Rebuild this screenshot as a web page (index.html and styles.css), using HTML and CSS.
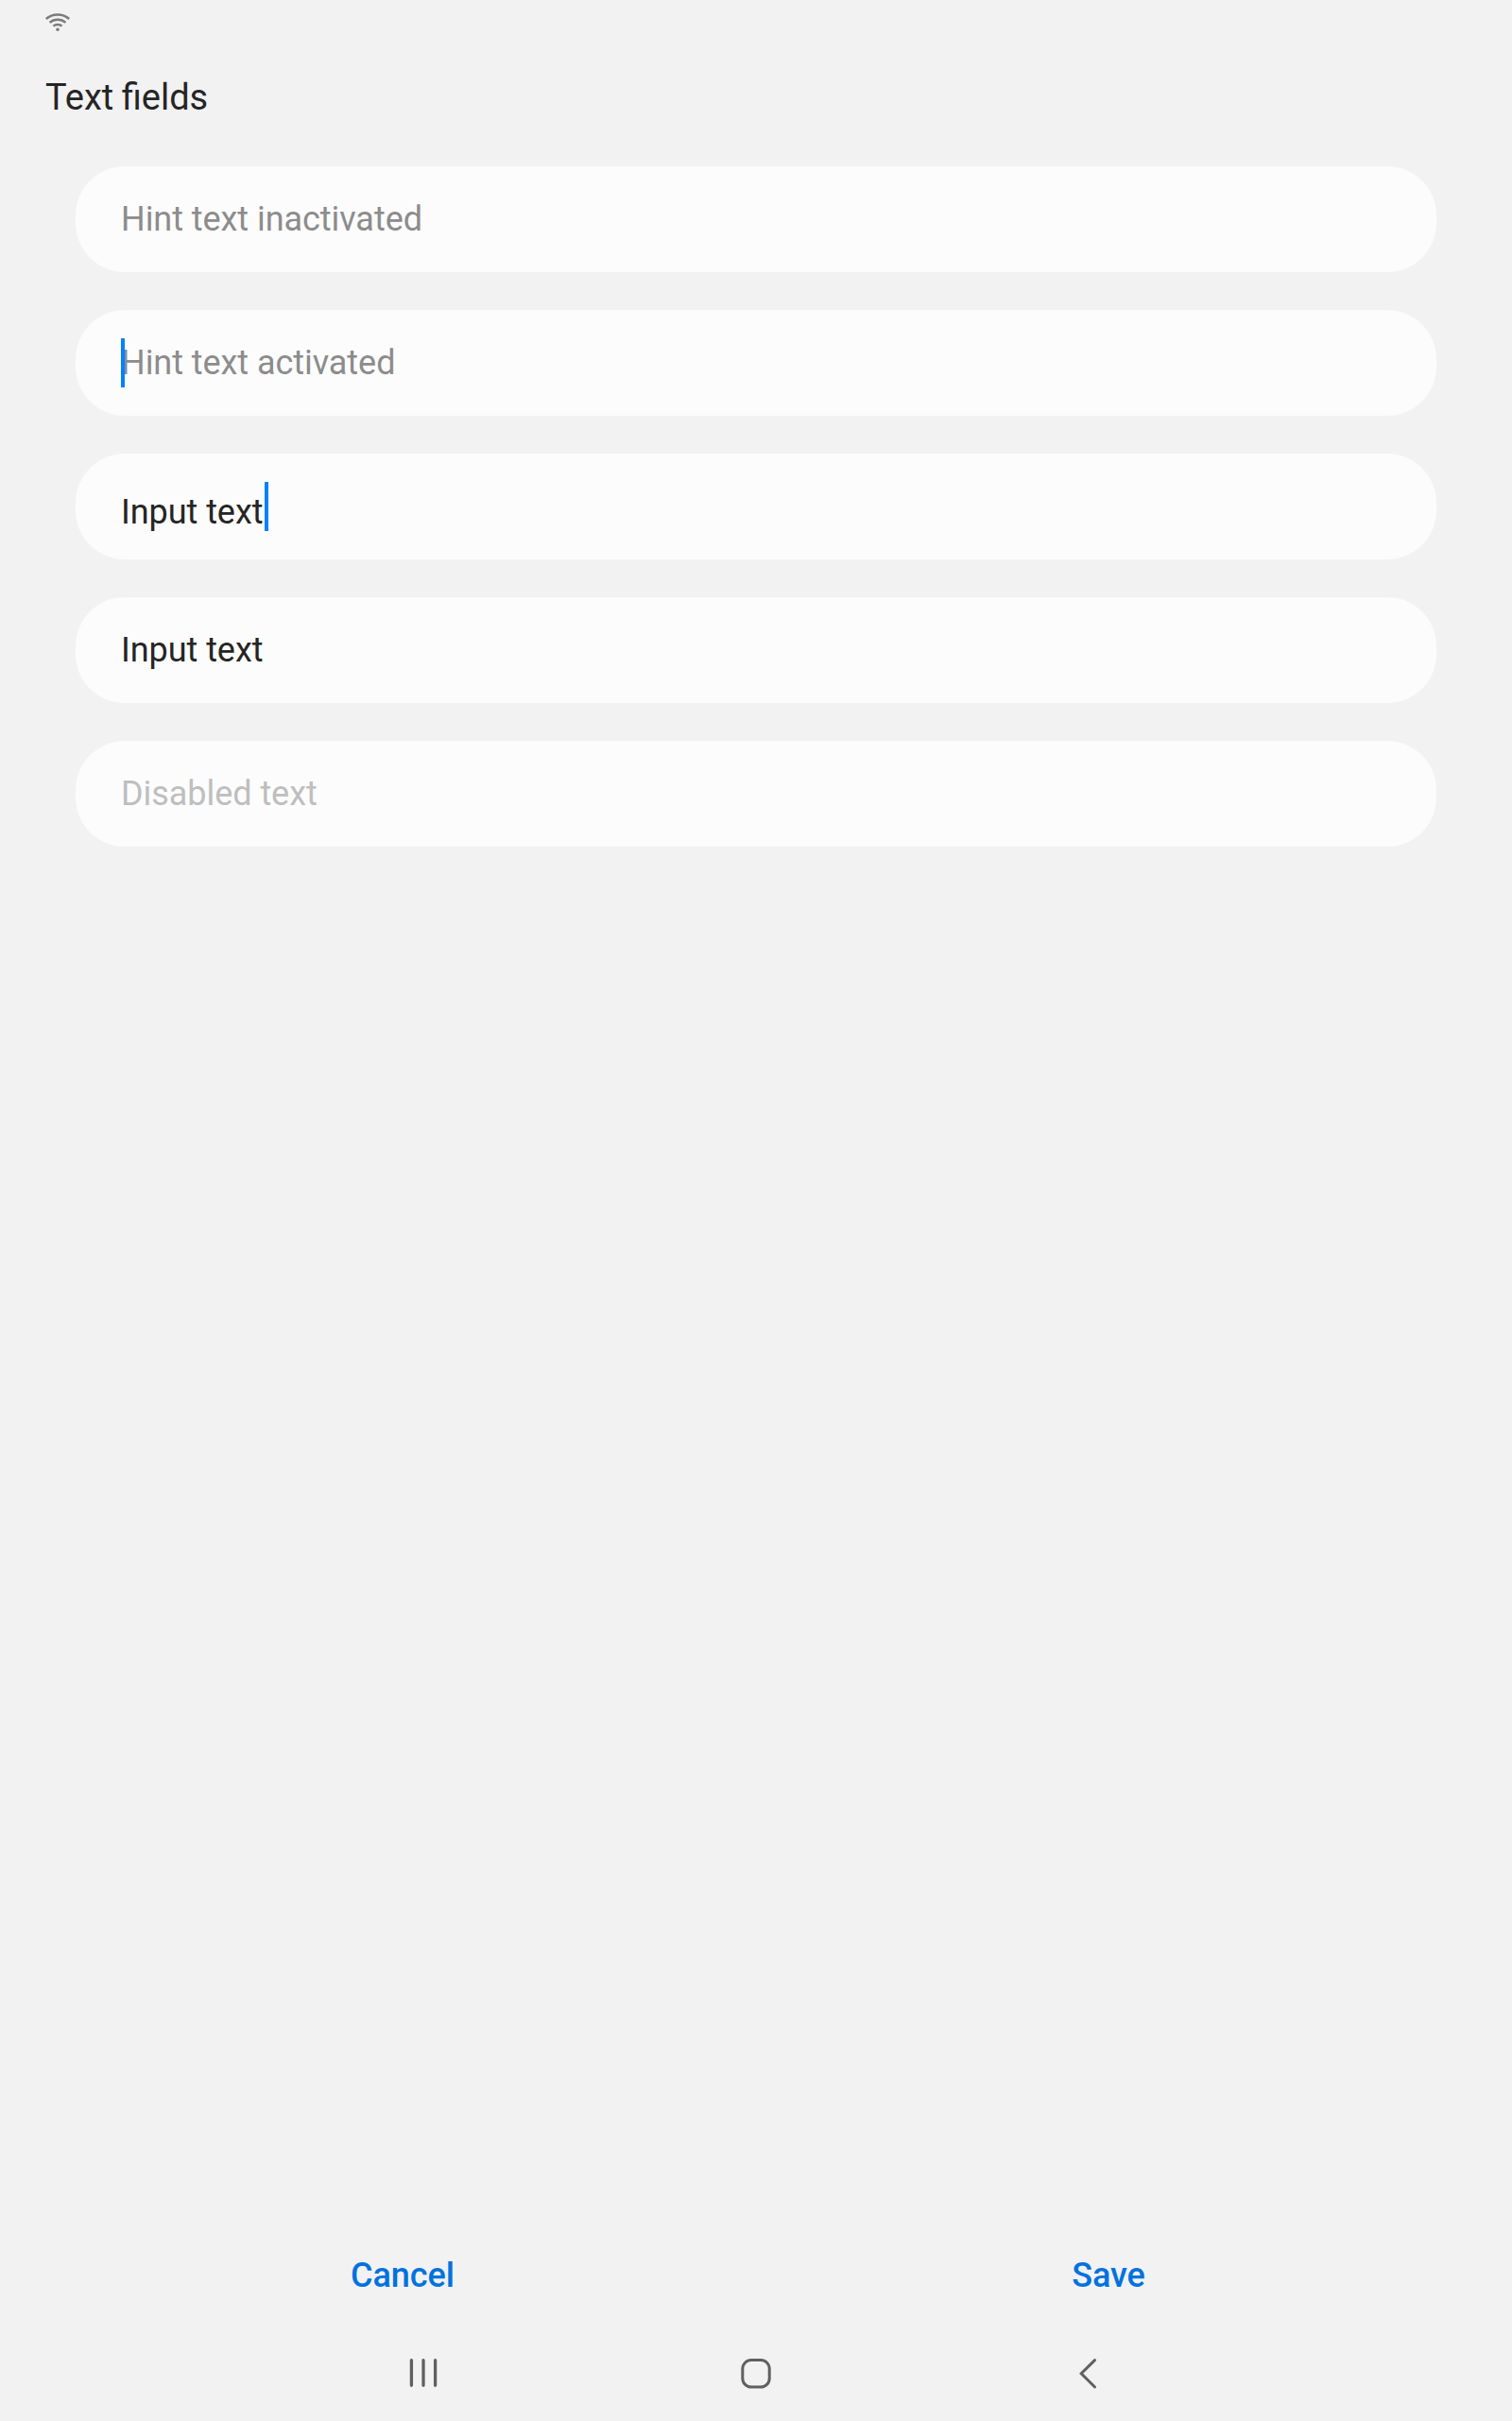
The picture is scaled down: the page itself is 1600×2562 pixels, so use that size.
FILE: index.html
```html
<!DOCTYPE html>
<html lang="en">
<head>
<meta charset="utf-8">
<title>Text fields</title>
<link rel="stylesheet" href="styles.css">
</head>
<body>
<div class="screen">
  <header class="status-bar">
    <svg class="wifi" width="28" height="22" viewBox="0 0 28 22" fill="none" stroke="#7b7b7b" stroke-width="2.5">
      <path d="M1.8 8C8.5 1.9 19.5 1.9 26.2 8"/>
      <path d="M5.6 11.9C10.3 7.7 17.7 7.7 22.4 11.9"/>
      <path d="M9.4 15.6C12 13.3 16 13.3 18.6 15.6"/>
      <circle cx="14" cy="19.2" r="1.8" fill="#7b7b7b" stroke="none"/>
    </svg>
  </header>
  <h1 class="title">Text fields</h1>
  <main class="fields">
    <div class="field hint"><span class="label">Hint text inactivated</span></div>
    <div class="field hint"><span class="label">Hint text activated</span><i class="cursor cursor-start"></i></div>
    <div class="field typing"><span class="label">Input text</span><i class="cursor"></i></div>
    <div class="field"><span class="label">Input text</span></div>
    <div class="field disabled"><span class="label">Disabled text</span></div>
  </main>
  <footer class="actions">
    <button class="action cancel">Cancel</button>
    <button class="action save">Save</button>
  </footer>
  <nav class="nav-bar">
    <svg width="32" height="36" viewBox="0 0 32 36" fill="none" stroke="#606060" stroke-width="3.3" stroke-linecap="round">
      <path d="M3.4 3.7V30.3M16 3.7V30.3M28.6 3.7V30.3"/>
    </svg>
    <svg width="36" height="36" viewBox="0 0 36 36" fill="none" stroke="#606060" stroke-width="3">
      <rect x="3.8" y="3.5" width="28.4" height="28.6" rx="9.2"/>
    </svg>
    <svg width="32" height="36" viewBox="0 0 32 36" fill="none" stroke="#606060" stroke-width="3" stroke-linecap="round">
      <path d="M22.5 3.6L8.2 17.8L22.5 32"/>
    </svg>
  </nav>
</div>
</body>
</html>
```
FILE: styles.css
```css
* {
  box-sizing: border-box;
}

body {
  margin: 0;
  background: #f2f2f2;
  color: #252525;
  font-family: Roboto, "Liberation Sans", sans-serif;
}

.screen {
  display: flex;
  flex-direction: column;
  height: 2562px;
}

svg {
  display: block;
}

.status-bar {
  height: 48px;
  padding: 12px 47px 0;
}

.title {
  height: 128px;
  margin: 0;
  padding: 33px 48px 0;
  font-size: 38px;
  font-weight: 400;
  line-height: 44px;
  word-spacing: -1px;
}

.fields {
  flex: 1;
  display: flex;
  flex-direction: column;
  gap: 40px;
  padding: 0 80px;
}

.field {
  position: relative;
  display: flex;
  align-items: center;
  height: 112px;
  padding: 0 48px;
  border-radius: 52px;
  background: #fcfcfc;
  font-size: 36px;
  line-height: 42px;
  letter-spacing: -0.05px;
}

.hint {
  color: #8c8c8c;
}

.disabled {
  color: #bebebe;
}

.typing .label {
  padding-top: 12px;
}

.cursor {
  width: 4px;
  height: 52px;
  margin-left: 2px;
  background: #0381fe;
}

.cursor-start {
  position: absolute;
  left: 48px;
  margin: 0;
}

.actions {
  display: flex;
  justify-content: space-between;
  height: 120px;
  padding: 6px 54px 0;
}

.action {
  width: 746px;
  height: 72px;
  padding: 0;
  border: 0;
  background: none;
  color: #0072de;
  font: 500 36px/42px Roboto, "Liberation Sans", sans-serif;
  letter-spacing: -0.05px;
}

.cancel {
  width: 744px;
}

.nav-bar {
  display: flex;
  justify-content: space-between;
  height: 76px;
  padding: 8px 432px 0;
}
```
